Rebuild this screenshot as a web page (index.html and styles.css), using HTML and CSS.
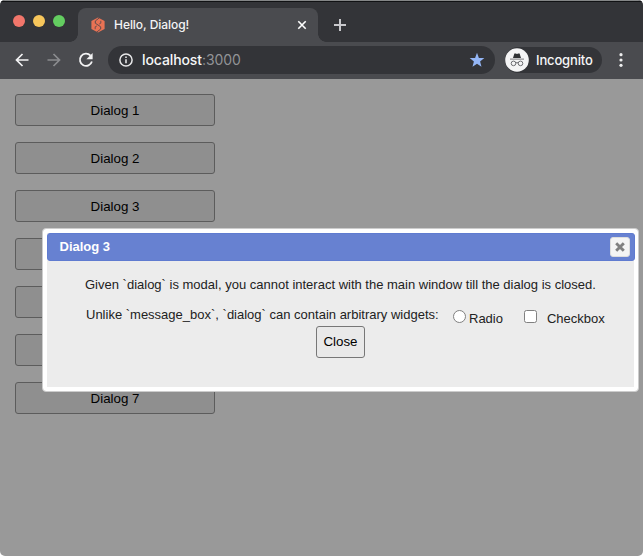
FILE: index.html
```html
<!DOCTYPE html>
<html lang="en">
<head>
<meta charset="utf-8">
<title>Hello, Dialog!</title>
<link rel="stylesheet" href="styles.css">
</head>
<body>
<div class="window">
  <header class="tabstrip">
    <div class="lights"><i class="red"></i><i class="yellow"></i><i class="green"></i></div>
    <div class="tab">
      <svg class="favicon" width="14" height="16" viewBox="0 0 14 16"><path d="M7 .5 13.600 4v8L7 15.500 .4 12V4z" fill="#e87254"/><path d="M8.800 .5 4.300 4v2.200l5.400 3.600V12L5.200 15.500" fill="none" stroke="#55484b" stroke-width=".9"/><path d="M9.800 3.800v2.400L8.200 7M4.200 12.200V9.800L5.800 9" fill="none" stroke="#55484b" stroke-width=".8"/></svg>
      <span class="tab-title">Hello, Dialog!</span>
      <svg class="tab-close" width="10" height="10" viewBox="0 0 10 10"><path d="m1.300 1.300 7.400 7.400m0-7.400L1.300 8.700" stroke="#fff" stroke-width="1.600"/></svg>
    </div>
    <svg class="new-tab" width="12" height="12" viewBox="0 0 12 12"><path d="M6 0v12M0 6h12" stroke="#c9c9cd" stroke-width="2"/></svg>
  </header>
  <nav class="toolbar">
    <svg class="nav-icon" width="16" height="16" viewBox="0 0 16 16"><path d="M14.500 8H2.500m6-6L2.500 8l6 6" fill="none" stroke="#f3f3f4" stroke-width="1.700"/></svg>
    <svg class="nav-icon" width="16" height="16" viewBox="0 0 16 16"><path d="M1.500 8h12m-6-6 6 6-6 6" fill="none" stroke="#8b8c8f" stroke-width="1.700"/></svg>
    <svg class="nav-icon" width="16" height="16" viewBox="0 0 16 16"><path d="M12.500 3.600A6.100 6.100 0 1 0 13.900 9.500" fill="none" stroke="#f3f3f4" stroke-width="1.800"/><path d="M14.600 1v6.200H8.400z" fill="#f3f3f4"/></svg>
    <div class="omnibox">
      <svg width="14" height="14" viewBox="0 0 14 14"><circle cx="7" cy="7" r="6.100" fill="none" stroke="#e8e8e9" stroke-width="1.500"/><path d="M7 6.300v4M7 3.500v1.600" stroke="#e8e8e9" stroke-width="1.600"/></svg>
      <span class="url">localhost<span class="port">:3000</span></span>
      <svg class="star" width="16" height="16" viewBox="0 0 16 16"><path d="m8 .8 1.900 5.100 5.400.2-4.200 3.400 1.400 5.200L8 11.700l-4.500 3 1.400-5.200L.7 6.100l5.400-.2z" fill="#94b6f6"/></svg>
    </div>
    <div class="profile">
      <svg width="24" height="24" viewBox="0 0 24 24"><circle cx="12" cy="12" r="11.800" fill="#f4f4f5"/><path d="m8 10 1.400-4.600h1.400L12 6l1.200-.6h1.400L16 10z" fill="#303134"/><path d="M5 11.100h14" stroke="#77787b"/><circle cx="8.500" cy="15.400" r="2.300" fill="none" stroke="#6c6d71"/><circle cx="15.500" cy="15.400" r="2.300" fill="none" stroke="#6c6d71"/><path d="M10.700 15q1.300-.8 2.600 0" fill="none" stroke="#6c6d71"/></svg>
      <span>Incognito</span>
    </div>
    <svg class="more" width="4" height="16" viewBox="0 0 4 16"><g fill="#ededee"><circle cx="2" cy="2.700" r="1.600"/><circle cx="2" cy="8" r="1.600"/><circle cx="2" cy="13.300" r="1.600"/></g></svg>
  </nav>
  <main class="page">
    <button class="launch">Dialog 1</button>
    <button class="launch">Dialog 2</button>
    <button class="launch">Dialog 3</button>
    <button class="launch" aria-label="Dialog 4"></button>
    <button class="launch" aria-label="Dialog 5"></button>
    <button class="launch" aria-label="Dialog 6"></button>
    <button class="launch">Dialog 7</button>
  </main>
  <section class="dialog" role="dialog">
    <div class="dialog-title">
      <b>Dialog 3</b>
      <button class="dialog-x" aria-label="Close dialog"><svg width="10" height="10" viewBox="0 0 10 10"><path d="m1.200 1.200 7.600 7.600m0-7.600L1.200 8.800" stroke="#808080" stroke-width="2.900"/></svg></button>
    </div>
    <p class="message">Given `dialog` is modal, you cannot interact with the main window till the dialog is closed.</p>
    <div class="widgets">
      <span class="unlike">Unlike `message_box`, `dialog` can contain arbitrary widgets:</span>
      <label class="option"><i class="radio"></i><span>Radio</span></label>
      <label class="option check"><i class="box"></i><span>Checkbox</span></label>
    </div>
    <button class="close">Close</button>
  </section>
</div>
</body>
</html>
```
FILE: styles.css
```css
* { box-sizing: border-box; }
body { margin: 0; background: #fff; font-family: "Liberation Sans", Arial, sans-serif; }
svg { display: block; flex: none; }
button { font: inherit; margin: 0; color: #000; }
.window { position: relative; width: 643px; height: 556px; overflow: hidden; border-radius: 5px; background: #999; }

.tabstrip { display: flex; height: 42px; padding: 7px 0 0 13px; background: #333438; border-top: 1px solid #848687; box-shadow: inset 0 1px #111214; }
.lights { display: flex; gap: 8px; width: 65px; padding-top: 7px; }
.lights i { width: 12px; height: 12px; border-radius: 50%; }
.red { background: #f2766b; }
.yellow { background: #f7c65b; }
.green { background: #63cd60; }
.tab { position: relative; display: flex; align-items: center; width: 240px; height: 34px; padding: 0 11px 0 13px; background: #4a4b4f; border-radius: 8px 8px 0 0; }
.tab::before, .tab::after { content: ""; position: absolute; bottom: 0; width: 8px; height: 8px; }
.tab::before { left: -8px; background: radial-gradient(circle at 0 0, transparent 7.5px, #4a4b4f 8px); }
.tab::after { right: -8px; background: radial-gradient(circle at 100% 0, transparent 7.5px, #4a4b4f 8px); }
.tab-title { margin-left: 9px; color: #f4f4f5; font: 500 12px/16px Inter, sans-serif; letter-spacing: -.05px; white-space: nowrap; }
.tab-close { margin-left: auto; }
.new-tab { margin: 11px 0 0 16px; }

.toolbar { display: flex; align-items: center; height: 37px; padding: 0 0 1px 14px; background: #4a4b4f; }
.nav-icon { margin-right: 16px; }
.omnibox { display: flex; align-items: center; width: 387px; height: 28px; margin-left: -2px; padding: 0 10px 0 11px; border-radius: 14px; background: #333438; }
.url { margin-left: 9px; color: #f6f6f7; font: 500 14px/18px Inter, sans-serif; letter-spacing: -.1px; }
.port { color: #929396; letter-spacing: -.1px; font-weight: 400; }
.star { margin-left: auto; }
.profile { display: flex; align-items: center; gap: 7px; width: 97px; height: 26px; margin-left: 10px; border-radius: 13px; background: #333438; color: #f6f6f7; font: 500 13px/16px Inter, sans-serif; letter-spacing: -.15px; }
.profile span { padding-bottom: 1px; }
.more { margin-left: 17px; }

.page { display: flex; flex-direction: column; gap: 16px; padding: 15px; }
.launch { width: 200px; height: 32px; flex: none; padding: 1px 0 0; border: 1px solid #5c5c5c; border-radius: 3px; background: #8f8f8f; font-size: 13.33px; }

.dialog { position: absolute; left: 42px; top: 228px; width: 597px; height: 164px; border: 1px solid #ccc; border-radius: 4px; background: #ececec; box-shadow: inset 0 0 0 4px #fff; display: flex; flex-direction: column; align-items: center; color: #222; font-size: 13px; }
.dialog-title { display: flex; align-items: center; justify-content: space-between; width: 588px; height: 28px; margin: 4px 0 0; padding: 0 4px 0 12px; border: 1px solid #5f7bd0; border-radius: 3px; background: #6781d1; color: #fff; font-size: 13px; }
.dialog-title b { padding-bottom: 2px; }
.dialog-x { display: grid; place-items: center; width: 20px; height: 20px; padding: 0; border: 1px solid #ddd; border-radius: 3px; background: #f4f4f4; }
.message { align-self: flex-start; margin: 15px 0 0 42px; line-height: 18px; white-space: nowrap; }
.widgets { display: flex; align-self: flex-start; height: 32px; margin: 12px 0 0 43px; line-height: 18px; white-space: nowrap; }
.unlike { width: 367px; }
.option { display: flex; padding-top: 4px; }
.option i { flex: none; width: 13px; height: 13px; border: 1px solid #808080; background: #fff; }
.option .radio { border-radius: 50%; }
.radio + span { margin-left: 3px; }
.check { margin-left: 21px; }
.option .box { border-radius: 2.5px; }
.box + span { margin-left: 10px; }
.close { width: 49px; height: 32px; margin-top: -12px; padding: 0 0 1px; border: 1px solid #777; border-radius: 3px; background: #e9e9e9; font-size: 13.33px; }
```
